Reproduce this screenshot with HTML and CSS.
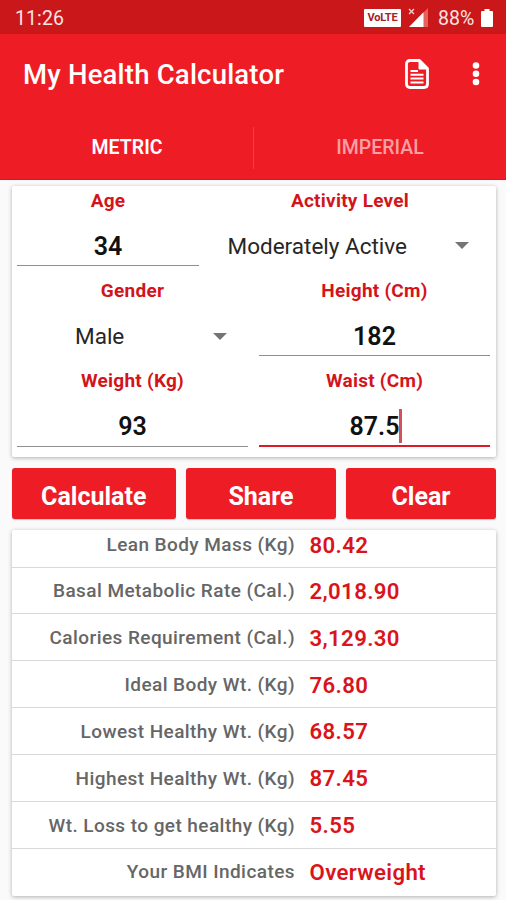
FILE: index.html
```html
<!DOCTYPE html>
<html lang="en">
<head>
<meta charset="utf-8">
<title>My Health Calculator</title>
<link rel="stylesheet" href="styles.css">
</head>
<body>
<div class="status">
  <span class="clock">11:26</span>
  <span class="volte">VoLTE</span>
  <svg class="signal" width="20" height="20" viewBox="0 0 20 20"><path d="M20 0V19H1z" fill="#e8605c"/><path d="M15.500 4.300V19H1z" fill="#fff"/><path d="M1 1l5 5M6 1L1 6" stroke="#f6cfcf" stroke-width="1.300"/></svg>
  <span class="percent">88%</span>
  <svg class="battery" width="12" height="18" viewBox="0 0 12 18"><path d="M3.500 0h5v2H11q1 0 1 1v14q0 1-1 1H1q-1 0-1-1V3q0-1 1-1h2.500z" fill="#fff"/></svg>
</div>
<header class="appbar">
  <h1 class="title">My Health Calculator</h1>
  <svg class="doc" width="24" height="30" viewBox="0 0 24 30" fill="none" stroke="#fff"><path d="M5 1.500H14.500L22.500 9.500V25Q22.500 28.500 19 28.500H5Q1.500 28.500 1.500 25V5Q1.500 1.500 5 1.500z" stroke-width="2.800" stroke-linejoin="round"/><path d="M14 2V10H22z" fill="#fff" stroke-width="1"/><path d="M5.500 12H13M5.500 15.800H18.500M5.500 19.600H18.500M5.500 23.400H18.500" stroke-width="2"/></svg>
  <svg class="more" width="8" height="24" viewBox="0 0 8 24" fill="#fff"><circle cx="4" cy="3.500" r="3.300"/><circle cx="4" cy="11.700" r="3.300"/><circle cx="4" cy="20" r="3.300"/></svg>
</header>
<nav class="tabs">
  <div class="tab active">METRIC</div>
  <div class="tab">IMPERIAL</div>
</nav>
<main class="content">
  <section class="card form">
    <div class="pair narrow">
      <div class="field"><label class="label">Age</label><div class="value line">34</div></div>
      <div class="field"><label class="label">Activity Level</label><div class="value select wide"><span class="choice">Moderately Active</span><i class="caret"></i></div></div>
    </div>
    <div class="pair">
      <div class="field"><label class="label">Gender</label><div class="value select"><span class="choice">Male</span><i class="caret"></i></div></div>
      <div class="field"><label class="label">Height (Cm)</label><div class="value line">182</div></div>
    </div>
    <div class="pair">
      <div class="field"><label class="label">Weight (Kg)</label><div class="value line">93</div></div>
      <div class="field"><label class="label">Waist (Cm)</label><div class="value line focus"><span class="typed">87.5<i class="cursor"></i></span></div></div>
    </div>
  </section>
  <div class="buttons">
    <button class="btn">Calculate</button>
    <button class="btn">Share</button>
    <button class="btn">Clear</button>
  </div>
  <section class="card results">
    <div class="row first"><span class="name">Lean Body Mass (Kg)</span><span class="result">80.42</span></div>
    <div class="row"><span class="name">Basal Metabolic Rate (Cal.)</span><span class="result">2,018.90</span></div>
    <div class="row"><span class="name">Calories Requirement (Cal.)</span><span class="result">3,129.30</span></div>
    <div class="row"><span class="name">Ideal Body Wt. (Kg)</span><span class="result">76.80</span></div>
    <div class="row"><span class="name">Lowest Healthy Wt. (Kg)</span><span class="result">68.57</span></div>
    <div class="row"><span class="name">Highest Healthy Wt. (Kg)</span><span class="result">87.45</span></div>
    <div class="row"><span class="name">Wt. Loss to get healthy (Kg)</span><span class="result">5.55</span></div>
    <div class="row"><span class="name">Your BMI Indicates</span><span class="result">Overweight</span></div>
  </section>
</main>
</body>
</html>
```
FILE: styles.css
```css
* { box-sizing: border-box; }
body { margin: 0; height: 900px; overflow: hidden; background: #fafafa; font-family: Roboto, sans-serif; }
.status { height: 34px; background: #c9171a; color: #fbe3e3; display: flex; align-items: center; padding: 2px 13px 0 15px; font-size: 19.5px; letter-spacing: 0.1px; }
.clock { margin-right: auto; }
.volte { width: 37px; height: 18px; border-radius: 1px; background: #fff; color: #a8201f; font-size: 11px; font-weight: 700; line-height: 18px; text-align: center; letter-spacing: -0.2px; }
.signal { margin-left: 7px; }
.percent { margin-left: 10px; width: 38px; white-space: nowrap; }
.battery { margin-left: 5px; }
.appbar { height: 81px; background: #ee1c25; display: flex; align-items: center; padding: 0 26px 0 23px; }
.title { margin: 0 auto 0 0; color: #fff; font-size: 27.5px; letter-spacing: 0.2px; line-height: 32px; font-weight: 500; }
.doc { margin: -2px 43px 0 0; }
.more { margin-top: -2px; }
.tabs { height: 65px; background: #ee1c25; display: flex; border-bottom: 1px solid #d9161e; }
.tab { flex: 1; height: 64px; line-height: 65px; text-align: center; font-size: 19.5px; font-weight: 500; color: #f8a0a4; }
.tab.active { flex: 0 0 254px; color: #fff; font-weight: 600; background: linear-gradient(#f43c43, #f43c43) right 12px / 1px 42px no-repeat; }
.content { padding: 5.500px 10.500px 0 11.500px; }
.card { background: #fff; border-radius: 2px; box-shadow: 0 1px 4px rgba(0,0,0,.3); }
.form { height: 271.500px; }
.pair { display: grid; grid-template-columns: 1fr 1fr; height: 90.400px; }
.pair.narrow { grid-template-columns: 193px 1fr; }
.field { padding: 0 5.500px; }
.label { display: block; height: 30px; line-height: 30px; text-align: center; color: #d4141b; font-size: 19px; letter-spacing: 0.25px; font-weight: 700; }
.value { height: 50px; line-height: 61px; text-align: center; font-size: 25px; font-weight: 600; color: #111; }
.line { height: 50.500px; border-bottom: 1.500px solid #8f8f8f; }
.focus { height: 51px; border-bottom: 2px solid #dd1b26; }
.typed { display: inline-block; position: relative; }
.cursor { position: absolute; right: -3px; top: 13px; width: 3px; height: 34px; background: #d4505c; }
.select { display: flex; align-items: center; font-weight: 400; font-size: 22.5px; color: #262626; padding: 11px 21px 0 58px; line-height: 30px; }
.select.wide { padding: 10px 21px 0 17.500px; }
.choice { margin-right: auto; }
.caret { border: 7px solid transparent; border-top-color: #757575; border-bottom: 0; }
.buttons { display: grid; grid-template-columns: 164.500px 150px 150px; gap: 10px; margin-top: 11px; }
.btn { height: 51px; border: 0; border-radius: 3px; background: #ee1c25; color: #fff; font: 700 25px/51px Roboto, sans-serif; padding: 3px 0 0; box-shadow: 0 1px 1px rgba(0,0,0,.2); }
.results { margin-top: 11px; height: 365.500px; }
.row { display: flex; align-items: center; height: 46.850px; border-top: 1px solid #d9d9d9; padding-top: 1px; }
.first { height: 36.500px; border-top: 0; padding: 0 0 7px; }
.name { width: 283.500px; text-align: right; font-size: 19px; letter-spacing: 0.43px; font-weight: 500; color: #666; white-space: nowrap; }
.result { margin-left: 14.500px; color: #d9141b; font-size: 22.2px; letter-spacing: 0.35px; font-weight: 600; }
```
